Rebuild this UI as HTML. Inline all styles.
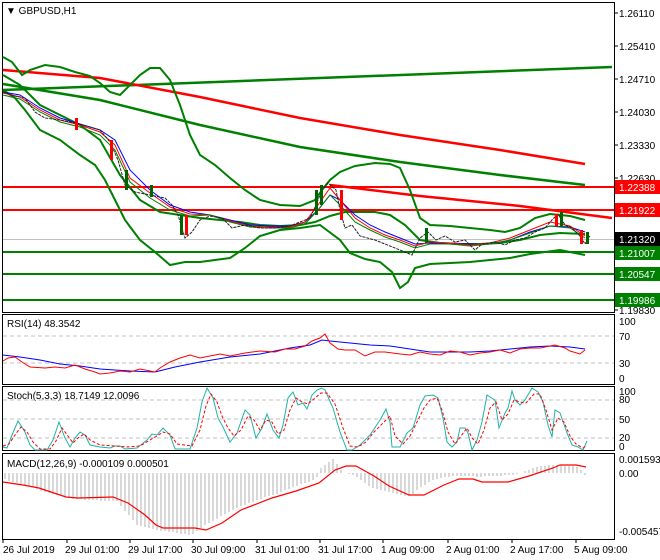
<!DOCTYPE html>
<html><head><meta charset="utf-8"><style>
html,body{margin:0;padding:0;background:#fff;width:660px;height:560px;overflow:hidden}
svg{display:block}
text{font-family:"Liberation Sans",sans-serif;font-size:10px;fill:#000}
</style></head><body>
<svg width="660" height="560" viewBox="0 0 660 560" xmlns="http://www.w3.org/2000/svg">
<rect x="2.5" y="2.5" width="612" height="310" fill="none" stroke="#000"/>
<rect x="2.5" y="314.5" width="612" height="70" fill="none" stroke="#000"/>
<rect x="2.5" y="386.5" width="612" height="64" fill="none" stroke="#000"/>
<rect x="2.5" y="453.5" width="612" height="86" fill="none" stroke="#000"/>
<text x="6" y="14" font-size="11">▼ GBPUSD,H1</text>
<g font-size="10">
<text x="619" y="17">1.26110</text><text x="619" y="50">1.25410</text>
<text x="619" y="83">1.24710</text><text x="619" y="116">1.24030</text>
<text x="619" y="149">1.23330</text><text x="619" y="182">1.22630</text>
<text x="619" y="314">1.19830</text>
</g>
<g stroke="#000"><line x1="615" y1="13" x2="618" y2="13"/><line x1="615" y1="46" x2="618" y2="46"/><line x1="615" y1="79" x2="618" y2="79"/><line x1="615" y1="112" x2="618" y2="112"/><line x1="615" y1="145" x2="618" y2="145"/><line x1="615" y1="178" x2="618" y2="178"/><line x1="615" y1="310" x2="618" y2="310"/></g>
<line x1="3" y1="239.5" x2="614" y2="239.5" stroke="#c0c0c0"/>
<line x1="3" y1="187" x2="614" y2="187" stroke="#f00" stroke-width="2"/>
<line x1="3" y1="210" x2="614" y2="210" stroke="#f00" stroke-width="2"/>
<line x1="3" y1="252" x2="614" y2="252" stroke="#008000" stroke-width="2"/>
<line x1="3" y1="274" x2="614" y2="274" stroke="#008000" stroke-width="2"/>
<line x1="3" y1="300" x2="614" y2="300" stroke="#008000" stroke-width="2"/>
<g fill="none" stroke-width="2.5">
<line x1="3" y1="90" x2="612" y2="67" stroke="#008000"/>
<polyline stroke="#008000" points="3,84 100,100 200,125 300,147 400,162 500,175 585,185"/>
<polyline stroke="#f00" points="3,70 100,78 200,97 300,118 400,135 500,150 585,164"/>
<polyline stroke="#f00" points="330,185 420,196 520,206 612,218"/>
</g>
<g fill="none" stroke="#008000" stroke-width="2">
<polyline points="3,57 12,62 22,75 30,70 45,65 60,67 75,72 90,76 100,83 110,92 120,95 130,85 140,75 150,68 160,68 170,80 180,105 190,135 200,155 215,165 230,178 245,190 260,200 280,205 300,206 315,200 322,190 330,180 340,172 355,166 375,163 390,164 400,168 410,190 420,218 430,225 450,226 470,228 490,230 505,232 520,228 535,218 550,214 570,216 585,220"/>
<polyline points="3,90 15,98 25,110 40,130 60,140 80,155 95,165 105,180 115,200 125,220 140,240 155,252 170,265 185,262 200,262 215,260 230,258 245,248 260,236 280,230 300,228 320,225 340,240 350,253 365,259 380,262 392,272 400,288 408,282 415,268 430,264 450,263 470,262 490,260 510,258 530,254 545,252 560,250 575,253 585,255"/>
<polyline points="3,75 20,85 40,105 60,115 80,125 100,140 120,175 140,200 160,212 180,215 200,218 220,220 240,222 260,225 280,226 300,225 315,222 330,216 345,212 360,212 375,212 390,215 405,225 420,240 440,243 460,244 480,244 500,243 520,240 540,235 560,233 585,234"/>
</g>
<g fill="none" stroke-width="1">
<polyline stroke="#00f" points="3,92 20,95 40,108 60,118 80,124 100,130 115,140 130,170 150,190 170,205 190,212 210,215 230,220 250,225 270,226 290,226 305,222 318,210 330,195 340,200 355,215 370,225 385,232 400,238 415,244 430,243 450,243 470,244 490,244 510,240 530,232 550,226 570,227 585,232"/>
<polyline stroke="#f00" points="3,93 20,97 40,110 60,120 80,125 100,132 115,145 130,178 150,193 170,207 190,214 210,215 230,221 250,226 270,227 290,227 305,222 318,205 330,188 340,200 355,218 370,228 385,235 400,240 415,246 430,242 450,243 470,245 490,243 510,238 530,230 550,222 570,226 585,236"/>
<polyline stroke="#008000" points="3,95 20,99 40,112 60,122 80,127 100,135 115,150 130,182 150,198 170,210 190,216 210,215 230,222 250,227 270,228 290,228 305,224 318,210 330,195 340,205 355,222 370,230 385,237 400,242 415,248 430,244 450,244 470,246 490,244 510,240 530,233 550,226 570,228 585,238"/>
</g>
<polyline fill="none" stroke="#222" stroke-width="1" stroke-dasharray="3,1" points="3,92 15,96 25,98 35,112 45,118 60,120 75,123 90,127 100,130 110,142 118,160 125,185 135,192 150,195 165,198 172,205 178,215 185,238 192,232 200,220 210,216 222,218 232,228 245,225 260,228 275,228 290,226 300,222 310,218 316,205 322,190 328,183 336,190 340,210 345,228 352,225 360,236 375,240 390,246 400,250 412,255 420,238 428,232 436,240 445,236 455,242 465,240 475,250 482,244 495,242 505,245 515,240 525,238 535,232 545,228 552,220 558,214 565,225 572,228 580,236 585,244 590,236"/>
<g fill="#006400"><rect x="180" y="215" width="3" height="20"/><rect x="125" y="170" width="3" height="20"/><rect x="315" y="190" width="3" height="25"/><rect x="425" y="228" width="3" height="15"/><rect x="560" y="212" width="3" height="14"/><rect x="586" y="232" width="3" height="12"/><rect x="320" y="185" width="3" height="20"/><rect x="150" y="185" width="3" height="12"/></g>
<g fill="#f00"><rect x="110" y="140" width="3" height="20"/><rect x="340" y="190" width="3" height="30"/><rect x="580" y="230" width="3" height="14"/><rect x="555" y="214" width="3" height="12"/><rect x="75" y="118" width="3" height="12"/><rect x="185" y="215" width="3" height="20"/></g>
<rect x="615" y="180" width="45" height="14" fill="#f00"/><text x="619" y="191" style="fill:#fff">1.22388</text>
<rect x="615" y="203" width="45" height="14" fill="#f00"/><text x="619" y="214" style="fill:#fff">1.21922</text>
<rect x="615" y="232" width="45" height="14" fill="#000"/><text x="619" y="243" style="fill:#fff">1.21320</text>
<rect x="615" y="246" width="45" height="14" fill="#008000"/><text x="619" y="257" style="fill:#fff">1.21007</text>
<rect x="615" y="267" width="45" height="14" fill="#008000"/><text x="619" y="278" style="fill:#fff">1.20547</text>
<rect x="615" y="293" width="45" height="14" fill="#008000"/><text x="619" y="304" style="fill:#fff">1.19986</text>
<text x="7" y="327">RSI(14) 48.3542</text>
<g stroke="#c0c0c0" stroke-dasharray="4,3"><line x1="3" y1="336" x2="614" y2="336"/><line x1="3" y1="363" x2="614" y2="363"/></g>
<polyline fill="none" stroke="#00f" points="3,355 20,357 40,360 60,364 80,366 100,369 130,371 155,372 175,367 200,362 230,357 260,354 290,348 310,345 322,340 330,341 350,343 370,345 390,346 410,349 430,352 450,352 470,352 490,351 510,349 530,347 550,346 570,347 585,349"/>
<polyline fill="none" stroke="#f00" points="3,361 8,358 15,357 22,362 30,367 45,368 55,367 65,368 75,365 85,369 95,372 100,374 110,373 120,371 130,372 140,369 155,372 160,368 170,362 180,358 190,355 200,358 210,356 220,354 230,356 245,353 260,351 275,352 285,349 295,349 305,346 312,341 320,338 325,334 330,343 338,349 345,350 355,350 365,356 375,352 385,352 400,354 410,355 420,352 430,354 440,355 450,351 460,352 470,355 480,353 490,352 500,350 510,353 520,349 530,348 540,348 550,346 555,345 565,348 570,351 580,354 585,350"/>
<g font-size="10"><text x="619" y="325">100</text><text x="619" y="340">70</text><text x="619" y="367">30</text><text x="619" y="382">0</text></g>
<text x="7" y="399">Stoch(5,3,3) 18.7149 12.0096</text>
<g stroke="#c0c0c0" stroke-dasharray="4,3"><line x1="3" y1="400" x2="614" y2="400"/><line x1="3" y1="419" x2="614" y2="419"/><line x1="3" y1="438" x2="614" y2="438"/></g>
<polyline fill="none" stroke="#20b2aa" points="3,447 7,448 12,435 18,421 25,432 30,445 35,450 47,450 53,440 59,422 65,438 70,447 75,438 80,432 85,435 90,445 100,447 110,448 115,446 120,446 125,449 137,448 147,440 152,434 157,435 163,428 170,435 175,449 190,449 197,428 202,402 207,388 213,398 218,418 223,427 230,442 237,433 245,410 250,415 256,438 262,428 267,414 273,430 279,438 283,425 288,398 293,392 298,405 303,403 307,409 312,395 317,390 322,388 325,390 333,408 340,432 347,450 352,450 360,445 370,435 380,420 386,409 390,422 392,447 400,447 407,433 413,428 420,405 425,396 433,395 438,398 443,418 447,442 452,447 457,442 460,428 465,428 468,433 472,450 477,440 482,422 487,395 490,397 495,400 499,428 505,413 508,408 512,391 515,400 520,405 525,400 532,388 538,392 543,402 548,425 552,437 555,410 560,413 567,433 572,445 578,447 583,450 587,441"/>
<polyline fill="none" stroke="#f00" stroke-dasharray="3,2" points="3,446 9,444 15,435 21,427 27,432 33,442 40,449 50,449 56,441 62,428 68,436 73,443 78,438 84,434 90,440 100,445 115,446 127,447 140,446 150,440 157,436 163,432 170,434 177,444 192,446 200,430 206,406 211,394 217,402 222,416 228,428 234,436 241,430 248,416 254,420 260,430 266,420 272,422 278,434 284,430 290,410 296,398 302,402 308,404 315,398 321,393 327,393 335,404 343,428 350,446 358,447 366,442 374,432 384,422 390,416 395,436 403,444 410,436 417,422 424,408 430,400 437,398 442,410 448,432 455,444 461,436 467,428 472,438 478,444 484,430 490,408 496,402 502,420 508,414 514,400 520,402 526,403 534,394 540,394 546,410 552,430 558,418 564,422 570,436 576,444 583,448 586,446"/>
<g font-size="10"><text x="619" y="395">100</text><text x="619" y="403">80</text><text x="619" y="423">50</text><text x="619" y="441">20</text><text x="619" y="450">0</text></g>
<text x="7" y="467">MACD(12,26,9) -0.000109 0.000501</text>
<g stroke="#b0b0b0">
<path d="M5,473V479M9,473V481M13,473V482M17,473V483M21,473V484M25,473V485M29,473V486M33,473V487M37,473V489M41,473V491M45,473V492M49,473V493M53,473V494M57,473V495M61,473V496M65,473V497M69,473V498M73,473V499M77,473V499M81,473V499M85,473V500M89,473V500M93,473V500M97,473V500M101,473V501M105,473V501M109,473V501M113,473V501M117,473V501M121,473V506M125,473V511M129,473V515M133,473V520M137,473V525M141,473V526M145,473V527M149,473V528M153,473V529M157,473V530M161,473V531M165,473V531M169,473V532M173,473V532M177,473V533M181,473V534M185,473V534M189,473V535M193,473V534M197,473V531M201,473V528M205,473V525M209,473V523M213,473V521M217,473V519M221,473V516M225,473V514M229,473V512M233,473V510M237,473V508M241,473V506M245,473V505M249,473V503M253,473V502M257,473V500M261,473V499M265,473V497M269,473V496M273,473V495M277,473V494M281,473V492M285,473V490M289,473V489M293,473V487M297,473V486M301,473V484M305,473V483M309,473V482M313,473V480M317,473V477M321,473V468M325,473V465M329,473V462M333,473V459M337,473V464M341,473V470M345,473V473M349,473V474M353,473V475M357,473V477M361,473V480M365,473V483M369,473V486M373,473V488M377,473V489M381,473V490M385,473V491M389,473V492M393,473V493M397,473V494M401,473V495M405,473V496M409,473V496M413,473V494M417,473V490M421,473V487M425,473V485M429,473V482M433,473V480M437,473V479M441,473V478M445,473V477M449,473V477M453,473V476M457,473V476M461,473V476M465,473V476M469,473V476M473,473V476M477,473V477M481,473V477M485,473V476M489,473V476M493,473V476M497,473V476M501,473V476M505,473V475M509,473V475M513,473V475M517,473V474M521,473V473M525,473V471M529,473V470M533,473V468M537,473V467M541,473V466M545,473V466M549,473V465M553,473V465M557,473V465M561,473V465M565,473V466M569,473V466M573,473V466M577,473V467M581,473V470M585,473V475"/>
</g>
<polyline fill="none" stroke="#f00" stroke-width="1.2" points="3,482 23,485 39,488 66,497 78,498 113,497 128,503 145,515 156,525 163,528 195,528 206,530 222,523 241,510 272,498 296,491 319,483 335,470 346,466 356,466 374,476 389,486 409,495 424,495 444,485 459,479 473,479 482,482 508,482 529,476 553,468 560,465 576,465 586,467"/>
<g font-size="10"><text x="619" y="463">0.001593</text><text x="619" y="477">0.00</text><text x="619" y="535">-0.005457</text></g>
<g stroke="#000"><line x1="3" y1="539" x2="3" y2="543"/><line x1="67" y1="539" x2="67" y2="543"/><line x1="130" y1="539" x2="130" y2="543"/><line x1="193" y1="539" x2="193" y2="543"/><line x1="257" y1="539" x2="257" y2="543"/><line x1="320" y1="539" x2="320" y2="543"/><line x1="383" y1="539" x2="383" y2="543"/><line x1="448" y1="539" x2="448" y2="543"/><line x1="512" y1="539" x2="512" y2="543"/><line x1="576" y1="539" x2="576" y2="543"/></g>
<g font-size="10">
<text x="3" y="553">26 Jul 2019</text><text x="65" y="553">29 Jul 01:00</text>
<text x="128" y="553">29 Jul 17:00</text><text x="191" y="553">30 Jul 09:00</text>
<text x="255" y="553">31 Jul 01:00</text><text x="318" y="553">31 Jul 17:00</text>
<text x="381" y="553">1 Aug 09:00</text><text x="446" y="553">2 Aug 01:00</text>
<text x="510" y="553">2 Aug 17:00</text><text x="574" y="553">5 Aug 09:00</text>
</g>
</svg>
</body></html>
